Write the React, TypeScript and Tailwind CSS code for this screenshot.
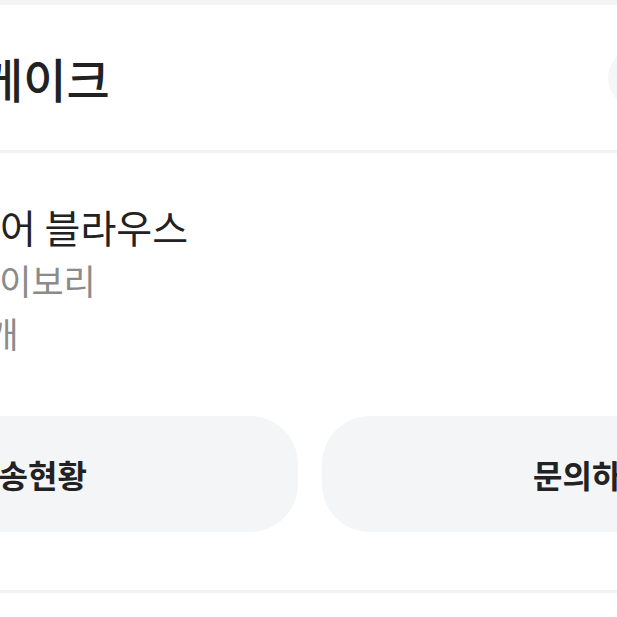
import React from "react";

const OrderItemCard = () => {
  return (
    <main
      className="w-[617px] h-[617px] overflow-hidden bg-white text-[#222222]"
      style={{ fontFamily: '"Noto Sans CJK KR", "Noto Sans", sans-serif' }}
    >
      {/* 상단 여백 */}
      <div className="h-[5px] bg-[#f4f4f5]" />

      {/* 판매처 헤더 */}
      <header className="h-[145px] flex items-center">
        <h1 className="ml-[-20px] text-[47px] font-medium leading-none whitespace-nowrap">
          케이크
        </h1>
        <div className="ml-auto mr-[-51px] w-[60px] h-[60px] shrink-0 rounded-full bg-[#f5f6f8]" />
      </header>

      <div className="h-[3px] bg-[#f2f2f3]" />

      {/* 상품 정보 */}
      <section className="pt-[47px] flex flex-col leading-[53px] whitespace-nowrap">
        <p className="ml-[-36px] text-[39px] text-[#222222]">시어 블라우스</p>
        <p className="ml-[-33px] text-[35px] text-[#8b8b8b]">아이보리</p>
        <p className="ml-[-33px] text-[35px] text-[#8b8b8b]">1개</p>
      </section>

      {/* 버튼 */}
      <div className="mt-[57px] ml-[-242px] w-[1104px] flex gap-6">
        <button className="w-[540px] h-[116px] shrink-0 rounded-[48px] bg-[#f3f5f7] text-[32px] font-bold text-[#222222]">
          배송현황
        </button>
        <button className="w-[540px] h-[116px] shrink-0 rounded-[48px] bg-[#f3f5f7] text-[32px] font-bold text-[#222222]">
          문의하기
        </button>
      </div>

      <div className="mt-[58px] h-[3px] bg-[#f2f2f3]" />
    </main>
  );
};

export default OrderItemCard;
